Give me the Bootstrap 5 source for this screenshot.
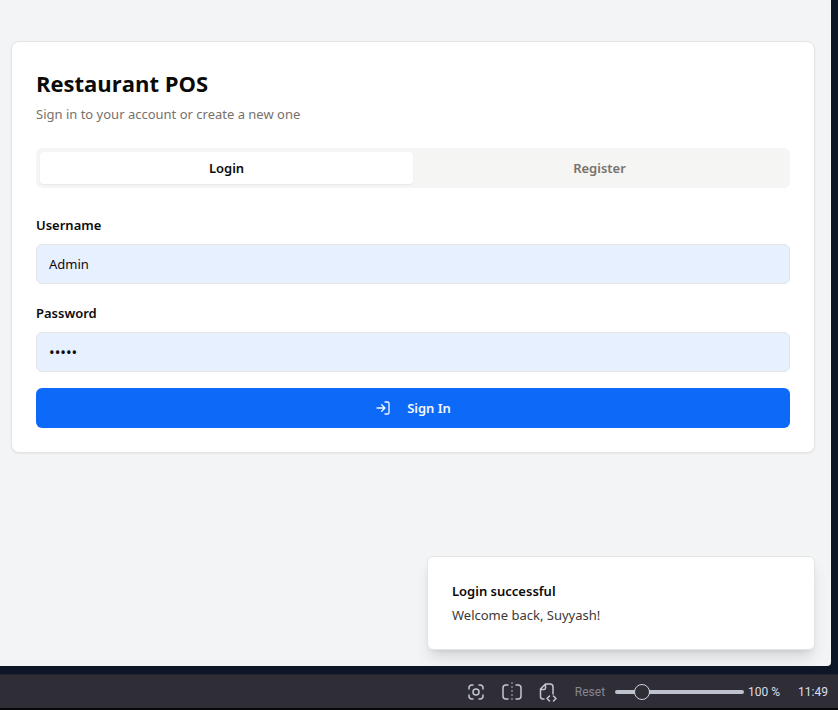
<!DOCTYPE html>
<html lang="en">
<head>
<meta charset="utf-8">
<meta name="viewport" content="width=device-width, initial-scale=1">
<title>Restaurant POS</title>
<link href="https://cdn.jsdelivr.net/npm/bootstrap@5.3.0/dist/css/bootstrap.min.css" rel="stylesheet">
<style>
body { font-family: "Noto Sans", "Open Sans", sans-serif; font-size: 13px; line-height: 20px; color: #0c0a09; background: #0d1626; }
.page-view { background: #f2f4f6; margin-right: 7px; padding: 41px 16px 16px 11px; border-bottom-right-radius: 4px; overflow: hidden; }
.login-card { border: 1px solid #e4e4e3; border-radius: 8px; box-shadow: 0 1px 2px rgba(0,0,0,.06); padding: 24px; }
.login-card h1 { font-family: "Open Sans", "Noto Sans", sans-serif; font-size: 22px; line-height: 26px; }
.subtitle { color: #78716c; }
.tab-strip { background: #f5f5f4; border-radius: 6px; padding: 4px; }
.tab-strip .nav-link { color: #78716c; font-weight: 600; padding: 6px 12px; border: 0; border-radius: 4px; background: transparent; }
.tab-strip .nav-link.active { color: #0c0a09; background: #fff; box-shadow: 0 1px 2px rgba(0,0,0,.06); }
.form-label { font-weight: 600; line-height: 18px; margin-bottom: 10px; }
.login-card .form-control { font-size: 13px; line-height: 20px; height: 40px; padding: 8px 12px; color: #0c0a09; background: #e6f0ff; border-color: #e4e4e7; border-radius: 6px; }
.login-card .form-control[type="password"] { font-size: 15px; }
.sign-in { font-size: 13px; line-height: 20px; font-weight: 600; height: 40px; border: 0; border-radius: 6px; background: #0d6af8; color: #f4f7ff; }
.notice { width: 388px; max-width: 100%; border: 1px solid #e4e4e3; border-radius: 6px; padding: 24px; box-shadow: 0 10px 15px -3px rgba(0,0,0,.12), 0 4px 6px -4px rgba(0,0,0,.12); }
.notice-text { color: #3b3938; }
.status-bar { height: 36px; margin-top: 8px; padding: 0 10px; background: #2f2e37; border-top: 1px solid #23242c; border-bottom: 2px solid #08080a; font-size: 12px; line-height: 16px; color: #dcdee8; font-family: Roboto, "Noto Sans", sans-serif; }
.status-bar .btn { color: #c3c6d1; line-height: 16px; font-size: 12px; border: 0; }
.status-bar .reset-zoom { color: #85868f; margin: 0 10px 0 18px; }
.status-bar time { margin-left: 18px; }
.zoom-slider { appearance: none; width: 129px; height: 16px; margin: 0; background: transparent; }
.zoom-slider::-webkit-slider-runnable-track { height: 4px; border-radius: 2px; background: #bec1ce; }
.zoom-slider::-webkit-slider-thumb { appearance: none; width: 16px; height: 16px; margin-top: -6px; border: 1px solid #d0d2dc; border-radius: 50%; background: #2f2e37; }
</style>
</head>
<body class="min-vh-100 d-flex flex-column">
<main class="page-view flex-grow-1 d-flex flex-column">
  <section class="login-card bg-white">
    <h1 class="fw-bold mb-0 mt-1">Restaurant POS</h1>
    <p class="subtitle mb-4 mt-2">Sign in to your account or create a new one</p>
    <div class="tab-strip nav nav-fill" role="tablist">
      <button class="nav-link active w-50" type="button" role="tab" aria-selected="true">Login</button>
      <button class="nav-link w-50" type="button" role="tab" aria-selected="false">Register</button>
    </div>
    <form class="d-flex flex-column gap-3 pt-4">
      <div class="pt-1">
        <label class="form-label d-block" for="username">Username</label>
        <input class="form-control" id="username" type="text" value="Admin">
      </div>
      <div class="pt-1">
        <label class="form-label d-block" for="password">Password</label>
        <input class="form-control" id="password" type="password" value="admin">
      </div>
      <button class="btn sign-in w-100 d-flex align-items-center justify-content-center gap-3" type="button">
        <svg width="16" height="16" viewBox="0 0 24 24" fill="none" stroke="currentColor" stroke-width="2" stroke-linecap="round" stroke-linejoin="round" aria-hidden="true"><path d="M15 3h4a2 2 0 0 1 2 2v14a2 2 0 0 1-2 2h-4M10 17l5-5-5-5M15 12H3"/></svg>
        Sign In
      </button>
    </form>
  </section>
  <div class="notice bg-white mt-auto ms-auto" role="status">
    <div class="fw-semibold mb-1">Login successful</div>
    <div class="notice-text">Welcome back, Suyyash!</div>
  </div>
</main>
<footer class="status-bar d-flex align-items-center justify-content-end">
  <div class="d-flex align-items-center gap-3">
    <button class="btn p-0 d-flex" type="button" aria-label="Capture page"><svg width="18" height="18" viewBox="0 0 18 18" fill="none" stroke="currentColor" stroke-width="1.5" stroke-linecap="round"><path d="M2 6V5a3 3 0 0 1 3-3h1M12 2h1a3 3 0 0 1 3 3v1M16 12v1a3 3 0 0 1-3 3h-1M6 16H5a3 3 0 0 1-3-3v-1"/><circle cx="9" cy="9" r="3"/></svg></button>
    <button class="btn p-0 d-flex" type="button" aria-label="Tile tabs"><svg width="22" height="22" viewBox="0 0 22 22" fill="none" stroke="currentColor" stroke-width="1.5" stroke-linecap="round"><path d="M7 4H5a3 3 0 0 0-3 3v8a3 3 0 0 0 3 3h2M15 4h2a3 3 0 0 1 3 3v8a3 3 0 0 1-3 3h-2"/><path d="M11 1v20" stroke="#85868f" stroke-linecap="butt" stroke-dasharray="2 2"/></svg></button>
    <button class="btn p-0 d-flex" type="button" aria-label="Page actions"><svg width="18" height="20" viewBox="0 0 18 20" fill="none" stroke="currentColor" stroke-width="1.5" stroke-linecap="round" stroke-linejoin="round"><path d="M5 17H4a2.500 2.500 0 0 1-2.500-2.500V7L6.500 2H11a3 3 0 0 1 3 3v7M2 7.500h3A1.500 1.500 0 0 0 6.500 6V2M10.500 14l-2.500 2.500 2.500 2.500M14.500 14l2.500 2.500-2.500 2.500"/></svg></button>
  </div>
  <button class="btn reset-zoom p-0" type="button">Reset</button>
  <input class="zoom-slider" type="range" min="20" max="500" value="100" aria-label="Zoom level">
  <span class="ms-1">100 %</span>
  <time>11:49</time>
</footer>
<script src="https://cdn.jsdelivr.net/npm/bootstrap@5.3.0/dist/js/bootstrap.bundle.min.js"></script>
</body>
</html>
